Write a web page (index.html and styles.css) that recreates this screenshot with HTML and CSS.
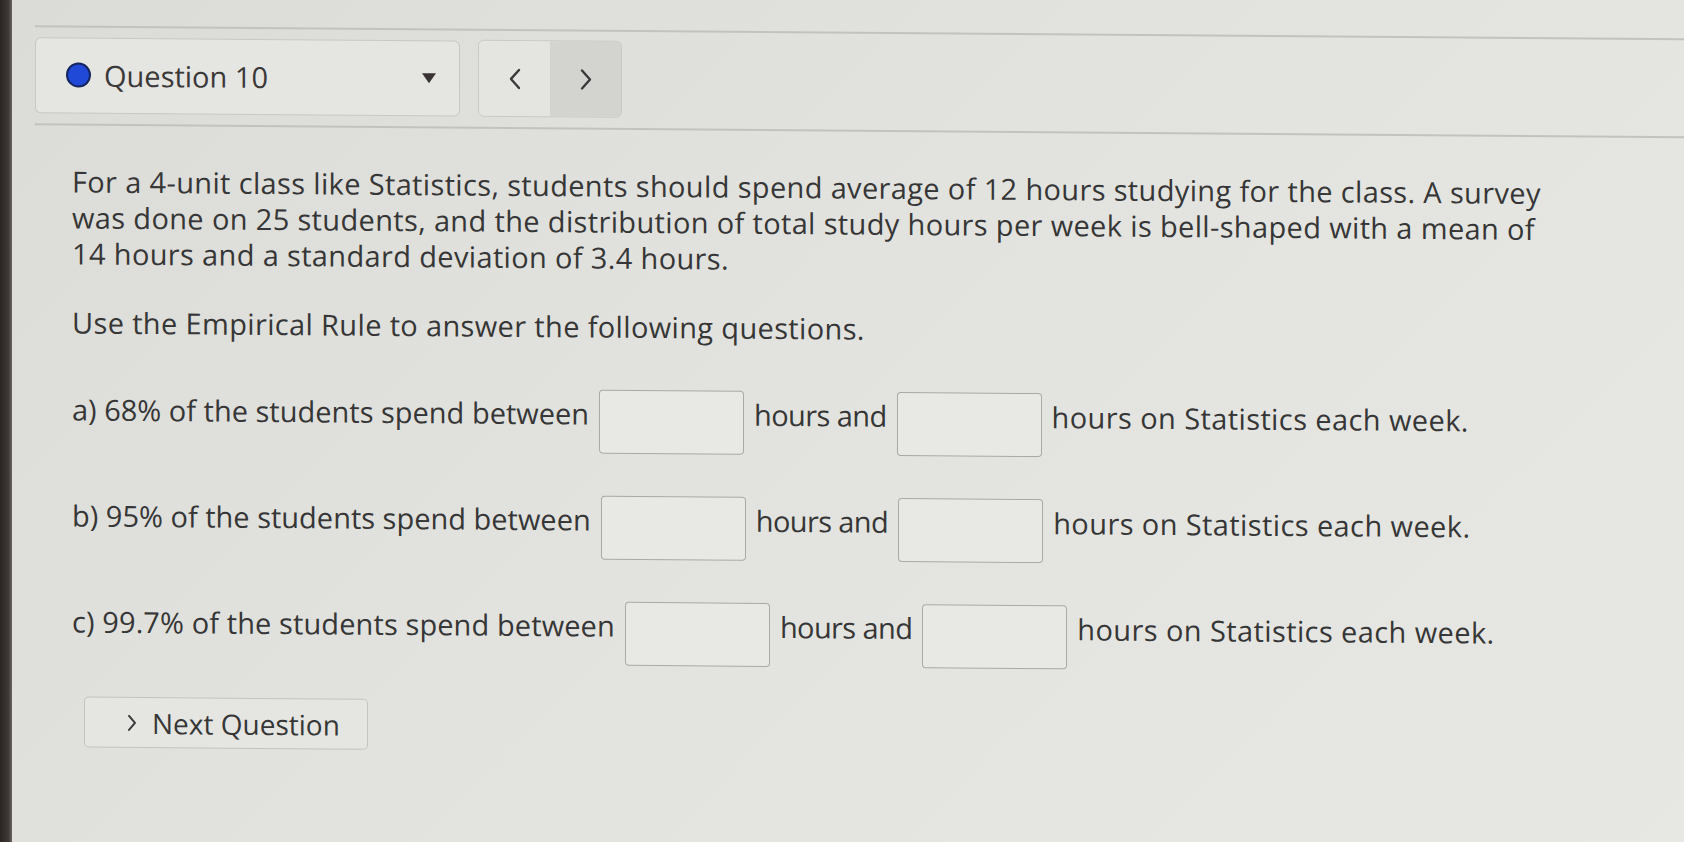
FILE: index.html
```html
<!DOCTYPE html>
<html lang="en">
<head>
<meta charset="utf-8">
<title>Question 10</title>
<link rel="stylesheet" href="styles.css">
</head>
<body>
<div class="screen">
  <div class="bezel"></div>
  <main class="page">
    <header class="toolbar">
      <div class="question-select">
        <span class="dot"></span>
        <span class="q-label">Question 10</span>
        <svg class="caret" width="16" height="12" viewBox="0 0 16 12"><path d="M1 1 L15 1 L8 11 Z" fill="#3a3334"/></svg>
      </div>
      <div class="pager">
        <button class="pager-btn prev" aria-label="Previous">
          <svg width="14" height="22" viewBox="0 0 14 22"><path d="M11 2 L3 11 L11 20" fill="none" stroke="#3a3a3a" stroke-width="2.4" stroke-linecap="round" stroke-linejoin="round"/></svg>
        </button>
        <button class="pager-btn next" aria-label="Next">
          <svg width="14" height="22" viewBox="0 0 14 22"><path d="M3 2 L11 11 L3 20" fill="none" stroke="#3a3a3a" stroke-width="2.4" stroke-linecap="round" stroke-linejoin="round"/></svg>
        </button>
      </div>
    </header>

    <section class="content">
      <p class="prompt">For a 4-unit class like Statistics, students should spend average of 12 hours studying for the class. A survey<br>was done on 25 students, and the distribution of total study hours per week is bell-shaped with a mean of<br>14 hours and a standard deviation of 3.4 hours.</p>
      <p class="prompt instruction">Use the Empirical Rule to answer the following questions.</p>

      <div class="answers">
        <div class="answer-row">
          <span class="label">a) 68% of the students spend between</span>
          <input class="blank" type="text">
          <span class="label mid">hours and</span>
          <input class="blank" type="text">
          <span class="label tail">hours on Statistics each week.</span>
        </div>
        <div class="answer-row">
          <span class="label">b) 95% of the students spend between</span>
          <input class="blank" type="text">
          <span class="label mid">hours and</span>
          <input class="blank" type="text">
          <span class="label tail">hours on Statistics each week.</span>
        </div>
        <div class="answer-row">
          <span class="label lead-c">c) 99.7% of the students spend between</span>
          <input class="blank" type="text">
          <span class="label mid">hours and</span>
          <input class="blank" type="text">
          <span class="label tail">hours on Statistics each week.</span>
        </div>
      </div>

      <button class="next-question">
        <svg width="12" height="20" viewBox="0 0 12 20"><path d="M3 3 L9 10 L3 17" fill="none" stroke="#3a3a3a" stroke-width="2" stroke-linecap="round" stroke-linejoin="round"/></svg>
        <span>Next Question</span>
      </button>
    </section>
  </main>
</div>
</body>
</html>
```

FILE: styles.css
```css
* { box-sizing: border-box; }

html, body {
  margin: 0;
  height: 100%;
}

body {
  background: linear-gradient(135deg, #dbdbd7 0%, #e2e3df 45%, #e7e8e4 100%);
  font-family: "Open Sans", "Noto Sans", sans-serif;
  color: #363636;
  overflow: hidden;
}

.screen {
  display: flex;
  height: 842px;
}

.bezel {
  width: 12px;
  flex: none;
  background: linear-gradient(90deg, #2a2524 0%, #3e3836 70%, #6b6561 100%);
}

.page {
  flex: 1;
  padding-top: 25px;
  transform: skewY(0.45deg);
  transform-origin: 0 0;
}

.toolbar {
  display: flex;
  align-items: center;
  gap: 18px;
  margin-left: 23px;
  padding: 9px 0 10px;
  border-top: 2px solid #c2c2bf;
  border-bottom: 2px solid #c2c2bf;
}

.question-select {
  width: 425px;
  height: 76px;
  display: flex;
  align-items: center;
  padding: 0 22px 0 30px;
  border: 1.5px solid #c8c8c5;
  border-radius: 6px;
  background: #e5e5e2;
}

.dot {
  width: 25px;
  height: 25px;
  border-radius: 50%;
  background: #2149d8;
  border: 2px solid #14245e;
  flex: none;
}

.q-label {
  margin-left: 13px;
  font-size: 29px;
  color: #3b3838;
  flex: 1;
}

.caret { flex: none; }

.pager {
  display: flex;
  width: 144px;
  height: 77px;
  border: 1.5px solid #c9c9c6;
  border-radius: 6px;
  overflow: hidden;
}

.pager-btn {
  flex: 1;
  border: none;
  margin: 0;
  padding: 0;
  display: flex;
  align-items: center;
  justify-content: center;
  font: inherit;
}

.pager-btn.prev { background: #e4e4e1; }
.pager-btn.next { background: #d3d3d0; }

.content {
  padding: 38px 0 0 60px;
}

.prompt {
  margin: 0;
  font-size: 29px;
  line-height: 36px;
  letter-spacing: 0.35px;
}

.instruction {
  margin-top: 33px;
}

.answers {
  margin-top: 45px;
  display: flex;
  flex-direction: column;
  gap: 42px;
}

.answer-row {
  display: flex;
  align-items: flex-start;
  gap: 10px;
}

.label {
  font-size: 29px;
  line-height: 36px;
  margin-top: 6px;
  white-space: nowrap;
}

.label.lead-c {
  letter-spacing: 0.1px;
}

.label.mid {
  letter-spacing: -0.6px;
}

.label.tail {
  letter-spacing: 0.4px;
}

.blank {
  width: 145px;
  height: 64px;
  border: 1.5px solid #a9aaa7;
  border-radius: 4px;
  background: #e8e9e5;
  margin: 0;
  padding: 0;
}

.next-question {
  margin: 35px 0 0 12px;
  width: 284px;
  height: 51px;
  display: flex;
  align-items: center;
  gap: 14px;
  padding: 0 0 0 41px;
  border: 1.5px solid #c3c3c0;
  border-radius: 5px;
  background: #e5e6e2;
  font-family: inherit;
  font-size: 28px;
  color: #363636;
}
```
